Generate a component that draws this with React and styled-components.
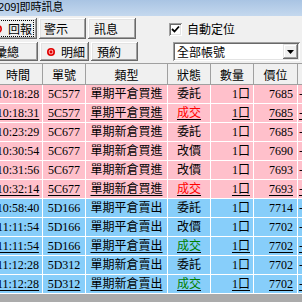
import React from 'react';
import styled, { createGlobalStyle } from 'styled-components';

const GlobalStyle = createGlobalStyle`
  html, body { margin: 0; padding: 0; background: #f0f0f0; }
  body {
    font-family: "Liberation Serif", "Noto Sans CJK TC", serif;
    font-size: 12px;
    color: #000;
  }
`;

const rows = [
  { time: '10:18:28', no: '5C577', type: '單期平倉買進', status: '委託', qty: '1口', price: '7685', side: 'buy' },
  { time: '10:18:31', no: '5C577', type: '單期平倉買進', status: '成交', qty: '1口', price: '7685', side: 'buy', done: true },
  { time: '10:23:29', no: '5C677', type: '單期新倉買進', status: '委託', qty: '1口', price: '7685', side: 'buy' },
  { time: '10:30:54', no: '5C677', type: '單期新倉買進', status: '改價', qty: '1口', price: '7690', side: 'buy' },
  { time: '10:31:56', no: '5C677', type: '單期新倉買進', status: '改價', qty: '1口', price: '7693', side: 'buy' },
  { time: '10:32:14', no: '5C677', type: '單期新倉買進', status: '成交', qty: '1口', price: '7693', side: 'buy', done: true },
  { time: '10:58:40', no: '5D166', type: '單期平倉賣出', status: '委託', qty: '1口', price: '7714', side: 'sell' },
  { time: '11:11:54', no: '5D166', type: '單期平倉賣出', status: '改價', qty: '1口', price: '7702', side: 'sell' },
  { time: '11:11:54', no: '5D166', type: '單期平倉賣出', status: '成交', qty: '1口', price: '7702', side: 'sell', done: true },
  { time: '11:12:28', no: '5D312', type: '單期新倉賣出', status: '委託', qty: '1口', price: '7702', side: 'sell' },
  { time: '11:12:28', no: '5D312', type: '單期新倉賣出', status: '成交', qty: '1口', price: '7702', side: 'sell', done: true },
];

const COLS = '49px 43px 82px 43px 43px 44px 1fr';

const Viewport = styled.div`
  width: 302px;
  height: 302px;
  overflow: hidden;
`;

// window is wider than the shot, its left edge is cut off
const Window = styled.div`
  width: 320px;
  height: 302px;
  margin-left: -6px;
  display: flex;
  flex-direction: column;
  background: #f0f0f0;
`;

const TitleBar = styled.div`
  height: 16px;
  flex: none;
  padding-left: 1px;
  background: linear-gradient(#a9c4e3, #c4d8ee);
  font-family: "Liberation Sans", "Noto Sans CJK TC", sans-serif;
  font-size: 11px;
  line-height: 15px;
  white-space: nowrap;
`;

const Controls = styled.div`
  display: grid;
  grid-template-columns: 175px 1fr;
  grid-template-rows: 21px 19px;
  row-gap: 3px;
  padding-top: 2px;
  flex: none;
`;

const ButtonGroup = styled.div`
  display: flex;
  gap: 2px;
  margin-left: -8px;
`;

const ToggleButton = styled.div`
  position: relative;
  box-sizing: border-box;
  width: ${p => p.$w}px;
  height: 100%;
  display: flex;
  align-items: center;
  padding-left: ${p => p.$pad}px;
  background: #f0f0f0;
  box-shadow: inset -1px -1px #696969, inset 1px 1px #ffffff,
    inset -2px -2px #a0a0a0, inset 2px 2px #e3e3e3;
  white-space: nowrap;
  ${p => p.$focus && `
    &::after {
      content: '';
      position: absolute;
      inset: 2px 3px 2px 3px;
      border: 1px dotted #000;
    }
  `}
`;

const Dot = styled.svg`
  width: 8px;
  height: 8px;
  margin-right: 6px;
  flex: none;
`;

const Label = styled.span`
  font-family: "Noto Sans CJK TC", sans-serif;
  font-size: 12px;
  line-height: 14px;
`;

const CheckRow = styled.div`
  display: flex;
  align-items: center;
  gap: 5px;
  padding-top: 1px;
`;

const CheckBox = styled.div`
  box-sizing: border-box;
  width: 13px;
  height: 13px;
  background: #fff;
  box-shadow: inset 1px 1px #a0a0a0, inset -1px -1px #fff,
    inset 2px 2px #696969, inset -2px -2px #e3e3e3;
  display: flex;
  align-items: center;
  justify-content: center;
`;

const Select = styled.div`
  box-sizing: border-box;
  width: 127px;
  height: 19px;
  margin-left: 4px;
  display: flex;
  align-items: center;
  justify-content: space-between;
  padding: 2px 2px 2px 4px;
  background: #fff;
  box-shadow: inset 1px 1px #a0a0a0, inset -1px -1px #fff,
    inset 2px 2px #696969, inset -2px -2px #e3e3e3;
`;

const SelectButton = styled.div`
  box-sizing: border-box;
  width: 15px;
  height: 15px;
  display: flex;
  align-items: center;
  justify-content: center;
  background: #f0f0f0;
  box-shadow: inset -1px -1px #696969, inset 1px 1px #e3e3e3,
    inset -2px -2px #a0a0a0, inset 2px 2px #fff;
`;

const Grid = styled.div`
  margin-top: 2px;
  flex: 1;
  background: #ababab;
  display: flex;
  flex-direction: column;
`;

const HeaderRow = styled.div`
  display: grid;
  grid-template-columns: ${COLS};
  height: 22px;
  box-sizing: border-box;
  border-top: 1px solid #a0a0a0;
  border-bottom: 1px solid #a0a0a0;
  background: #f0f0f0;
`;

const HeaderCell = styled.div`
  border-right: 1px solid #a0a0a0;
  display: flex;
  align-items: center;
  justify-content: center;
  font-family: "Noto Sans CJK TC", sans-serif;
  font-size: 12px;
`;

const Row = styled.div`
  display: grid;
  grid-template-columns: ${COLS};
  height: 19px;
  box-sizing: border-box;
  border-bottom: 1px solid #fff;
  background: ${p => (p.$side === 'buy' ? '#ffc0cb' : '#87cefa')};
  text-decoration: ${p => (p.$done ? 'underline' : 'none')};
  text-underline-offset: 2px;
`;

const Cell = styled.div`
  border-right: 1px solid #fff;
  overflow: hidden;
  white-space: nowrap;
  line-height: 18px;
  text-align: ${p => p.$align || 'center'};
  padding: 0 ${p => p.$pr || 0}px 0 ${p => p.$pl || 0}px;
  color: ${p => p.$color || '#000'};
`;

const statusColor = (r) => {
  if (r.status !== '成交') return '#000';
  return r.side === 'buy' ? '#ff0000' : '#008000';
};

const RedDot = () => (
  <Dot viewBox="0 0 8 8">
    <circle cx="4" cy="4" r="4" fill="#e00000" />
    <circle cx="4" cy="4" r="2.4" fill="#ffb0b0" />
    <circle cx="4" cy="4" r="1.4" fill="#e00000" />
  </Dot>
);

export default function App() {
  return (
    <Viewport>
      <GlobalStyle />
      <Window>
        <TitleBar>[209]即時訊息</TitleBar>
        <Controls>
          <ButtonGroup>
            <ToggleButton $w={51} $pad={8} $focus>
              <RedDot />
              <Label>回報</Label>
            </ToggleButton>
            <ToggleButton $w={47} $pad={5}><Label>警示</Label></ToggleButton>
            <ToggleButton $w={48} $pad={6}><Label>訊息</Label></ToggleButton>
          </ButtonGroup>
          <CheckRow>
            <CheckBox>
              <svg width="9" height="9" viewBox="0 0 9 9">
                <polyline points="1,4 3.5,6.5 8,1.5" fill="none" stroke="#000" strokeWidth="1.8" />
              </svg>
            </CheckBox>
            <Label>自動定位</Label>
          </CheckRow>
          <ButtonGroup>
            <ToggleButton $w={52} $pad={9}><Label>彙總</Label></ToggleButton>
            <ToggleButton $w={49} $pad={7}>
              <RedDot />
              <Label>明細</Label>
            </ToggleButton>
            <ToggleButton $w={47} $pad={6}><Label>預約</Label></ToggleButton>
          </ButtonGroup>
          <Select>
            <Label>全部帳號</Label>
            <SelectButton>
              <svg width="7" height="4" viewBox="0 0 7 4">
                <polygon points="0,0 7,0 3.5,4" fill="#000" />
              </svg>
            </SelectButton>
          </Select>
        </Controls>
        <Grid>
          <HeaderRow>
            <HeaderCell>時間</HeaderCell>
            <HeaderCell>單號</HeaderCell>
            <HeaderCell>類型</HeaderCell>
            <HeaderCell>狀態</HeaderCell>
            <HeaderCell>數量</HeaderCell>
            <HeaderCell>價位</HeaderCell>
            <HeaderCell />
          </HeaderRow>
          {rows.map((r, i) => (
            <Row key={i} $side={r.side} $done={r.done}>
              <Cell>{r.time}</Cell>
              <Cell>{r.no}</Cell>
              <Cell>{r.type}</Cell>
              <Cell $color={statusColor(r)}>{r.status}</Cell>
              <Cell $align="right" $pr={3}>{r.qty}</Cell>
              <Cell $align="right" $pr={4}>{r.price}</Cell>
              <Cell $align="left" $pl={1}>-</Cell>
            </Row>
          ))}
        </Grid>
      </Window>
    </Viewport>
  );
}
